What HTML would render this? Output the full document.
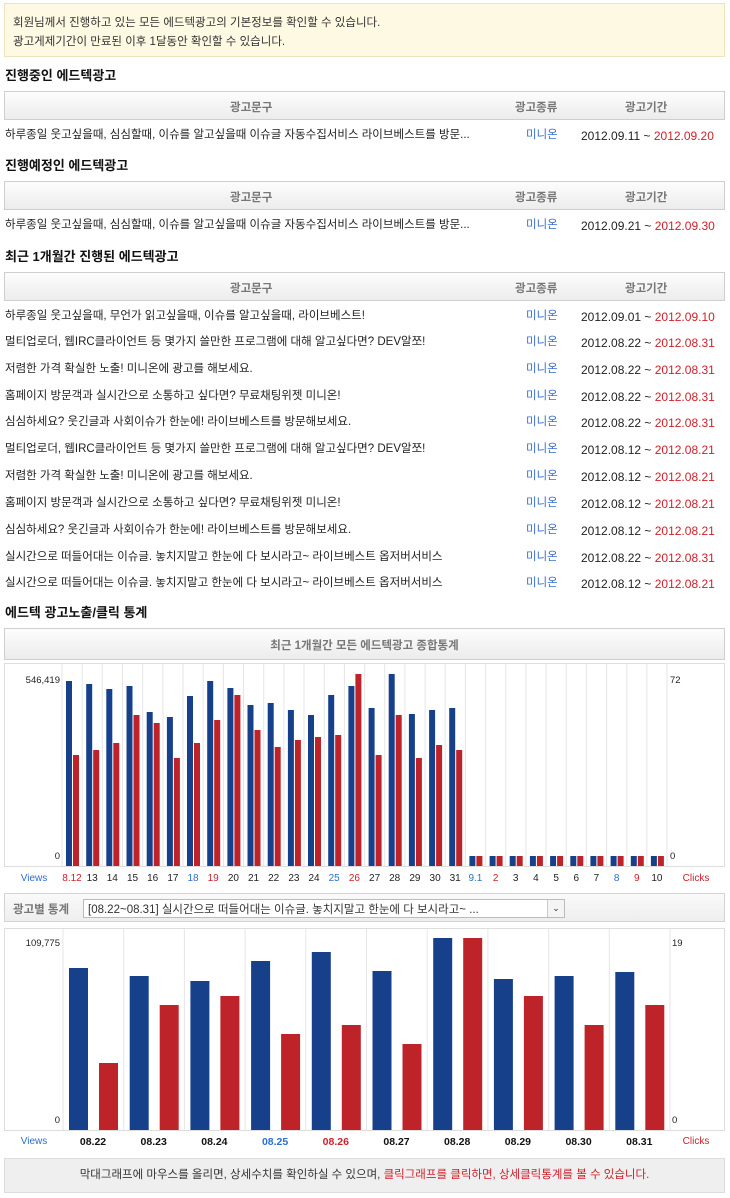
<!DOCTYPE html>
<html><head><meta charset="utf-8">
<style>
*{margin:0;padding:0;box-sizing:border-box}
body{width:730px;height:1198px;background:#fff;font-family:"Liberation Sans","Noto Sans CJK KR",sans-serif;font-size:12px;color:#333;position:relative;overflow:hidden}
.a{position:absolute}
.notice{left:4px;top:3px;width:721px;height:54px;background:#fdf9e3;border:1px solid #efe2bd}
.notice div{position:absolute;left:8px;font-size:11.5px;color:#333}
.h{left:5px;font-weight:bold;font-size:13px;color:#111}
.th{left:4px;width:721px;height:29px;border:1px solid #cfcfcf;background:linear-gradient(#fdfdfd,#ececec);font-weight:bold;color:#777;font-size:11.5px}
.th span{position:absolute;top:7px}
.row{left:4px;width:721px;height:20px;font-size:11.5px;color:#222}
.row .t{position:absolute;left:1px;top:0;white-space:nowrap}
.row .k{position:absolute;left:522px;top:0;color:#3a6fcf}
.row .d{position:absolute;left:577px;top:3px;white-space:nowrap;font-size:12px}
.r{color:#d0202a}
</style></head><body>
<div class="a notice"><div style="top:10px">회원님께서 진행하고 있는 모든 에드텍광고의 기본정보를 확인할 수 있습니다.</div><div style="top:29px">광고게제기간이 만료된 이후 1달동안 확인할 수 있습니다.</div></div>

<div class="a h" style="top:65px">진행중인 에드텍광고</div>
<div class="a th" style="top:91px"><span style="left:225px">광고문구</span><span style="left:510px">광고종류</span><span style="left:620px">광고기간</span></div>
<div class="a row" style="top:126px"><span class="t">하루종일 웃고싶을때, 심심할때, 이슈를 알고싶을때 이슈글 자동수집서비스 라이브베스트를 방문...</span><span class="k">미니온</span><span class="d">2012.09.11 ~ <span class="r">2012.09.20</span></span></div>

<div class="a h" style="top:155px">진행예정인 에드텍광고</div>
<div class="a th" style="top:181px"><span style="left:225px">광고문구</span><span style="left:510px">광고종류</span><span style="left:620px">광고기간</span></div>
<div class="a row" style="top:216px"><span class="t">하루종일 웃고싶을때, 심심할때, 이슈를 알고싶을때 이슈글 자동수집서비스 라이브베스트를 방문...</span><span class="k">미니온</span><span class="d">2012.09.21 ~ <span class="r">2012.09.30</span></span></div>

<div class="a h" style="top:246px">최근 1개월간 진행된 에드텍광고</div>
<div class="a th" style="top:272px"><span style="left:225px">광고문구</span><span style="left:510px">광고종류</span><span style="left:620px">광고기간</span></div>
<div class="a row" style="top:307px"><span class="t">하루종일 웃고싶을때, 무언가 읽고싶을때, 이슈를 알고싶을때, 라이브베스트!</span><span class="k">미니온</span><span class="d">2012.09.01 ~ <span class="r">2012.09.10</span></span></div>
<div class="a row" style="top:333px"><span class="t">멀티업로더, 웹IRC클라이언트 등 몇가지 쓸만한 프로그램에 대해 알고싶다면? DEV알쪼!</span><span class="k">미니온</span><span class="d">2012.08.22 ~ <span class="r">2012.08.31</span></span></div>
<div class="a row" style="top:360px"><span class="t">저렴한 가격 확실한 노출! 미니온에 광고를 해보세요.</span><span class="k">미니온</span><span class="d">2012.08.22 ~ <span class="r">2012.08.31</span></span></div>
<div class="a row" style="top:387px"><span class="t">홈페이지 방문객과 실시간으로 소통하고 싶다면? 무료채팅위젯 미니온!</span><span class="k">미니온</span><span class="d">2012.08.22 ~ <span class="r">2012.08.31</span></span></div>
<div class="a row" style="top:413px"><span class="t">심심하세요? 웃긴글과 사회이슈가 한눈에! 라이브베스트를 방문해보세요.</span><span class="k">미니온</span><span class="d">2012.08.22 ~ <span class="r">2012.08.31</span></span></div>
<div class="a row" style="top:440px"><span class="t">멀티업로더, 웹IRC클라이언트 등 몇가지 쓸만한 프로그램에 대해 알고싶다면? DEV알쪼!</span><span class="k">미니온</span><span class="d">2012.08.12 ~ <span class="r">2012.08.21</span></span></div>
<div class="a row" style="top:467px"><span class="t">저렴한 가격 확실한 노출! 미니온에 광고를 해보세요.</span><span class="k">미니온</span><span class="d">2012.08.12 ~ <span class="r">2012.08.21</span></span></div>
<div class="a row" style="top:494px"><span class="t">홈페이지 방문객과 실시간으로 소통하고 싶다면? 무료채팅위젯 미니온!</span><span class="k">미니온</span><span class="d">2012.08.12 ~ <span class="r">2012.08.21</span></span></div>
<div class="a row" style="top:521px"><span class="t">심심하세요? 웃긴글과 사회이슈가 한눈에! 라이브베스트를 방문해보세요.</span><span class="k">미니온</span><span class="d">2012.08.12 ~ <span class="r">2012.08.21</span></span></div>
<div class="a row" style="top:548px"><span class="t">실시간으로 떠들어대는 이슈글. 놓치지말고 한눈에 다 보시라고~ 라이브베스트 옵저버서비스</span><span class="k">미니온</span><span class="d">2012.08.22 ~ <span class="r">2012.08.31</span></span></div>
<div class="a row" style="top:574px"><span class="t">실시간으로 떠들어대는 이슈글. 놓치지말고 한눈에 다 보시라고~ 라이브베스트 옵저버서비스</span><span class="k">미니온</span><span class="d">2012.08.12 ~ <span class="r">2012.08.21</span></span></div>

<div class="a h" style="top:602px">에드텍 광고노출/클릭 통계</div>
<div class="a th" style="top:628px;height:32px"><span style="left:0;width:719px;text-align:center;top:8px">최근 1개월간 모든 에드텍광고 종합통계</span></div>

<svg class="a" style="left:0;top:660px" width="730" height="230" viewBox="0 660 730 230" font-family="Liberation Sans, Noto Sans CJK KR, sans-serif" font-size="10.5">
<rect x="4.5" y="663.5" width="720" height="203" fill="#fff" stroke="#ddd"/>
<g stroke="#e6e6e6">
<line x1="62" y1="664" x2="62" y2="866"/><line x1="82.2" y1="664" x2="82.2" y2="866"/><line x1="102.3" y1="664" x2="102.3" y2="866"/><line x1="122.5" y1="664" x2="122.5" y2="866"/><line x1="142.7" y1="664" x2="142.7" y2="866"/><line x1="162.9" y1="664" x2="162.9" y2="866"/><line x1="183" y1="664" x2="183" y2="866"/><line x1="203.2" y1="664" x2="203.2" y2="866"/><line x1="223.4" y1="664" x2="223.4" y2="866"/><line x1="243.5" y1="664" x2="243.5" y2="866"/><line x1="263.7" y1="664" x2="263.7" y2="866"/><line x1="283.9" y1="664" x2="283.9" y2="866"/><line x1="304" y1="664" x2="304" y2="866"/><line x1="324.2" y1="664" x2="324.2" y2="866"/><line x1="344.4" y1="664" x2="344.4" y2="866"/><line x1="364.6" y1="664" x2="364.6" y2="866"/><line x1="384.7" y1="664" x2="384.7" y2="866"/><line x1="404.9" y1="664" x2="404.9" y2="866"/><line x1="425.1" y1="664" x2="425.1" y2="866"/><line x1="445.2" y1="664" x2="445.2" y2="866"/><line x1="465.4" y1="664" x2="465.4" y2="866"/><line x1="485.6" y1="664" x2="485.6" y2="866"/><line x1="505.7" y1="664" x2="505.7" y2="866"/><line x1="525.9" y1="664" x2="525.9" y2="866"/><line x1="546.1" y1="664" x2="546.1" y2="866"/><line x1="566.3" y1="664" x2="566.3" y2="866"/><line x1="586.4" y1="664" x2="586.4" y2="866"/><line x1="606.6" y1="664" x2="606.6" y2="866"/><line x1="626.8" y1="664" x2="626.8" y2="866"/><line x1="646.9" y1="664" x2="646.9" y2="866"/><line x1="667" y1="664" x2="667" y2="866"/>
</g>
<g fill="#17408b">
<rect x="66" y="681" width="6" height="185"/><rect x="86.2" y="684" width="6" height="182"/><rect x="106.3" y="689" width="6" height="177"/><rect x="126.5" y="686" width="6" height="180"/><rect x="146.7" y="712" width="6" height="154"/><rect x="166.9" y="717" width="6" height="149"/><rect x="187" y="696" width="6" height="170"/><rect x="207.2" y="681" width="6" height="185"/><rect x="227.4" y="688" width="6" height="178"/><rect x="247.5" y="705" width="6" height="161"/><rect x="267.7" y="703" width="6" height="163"/><rect x="287.9" y="710" width="6" height="156"/><rect x="308" y="715" width="6" height="151"/><rect x="328.2" y="695" width="6" height="171"/><rect x="348.4" y="686" width="6" height="180"/><rect x="368.6" y="708" width="6" height="158"/><rect x="388.7" y="674" width="6" height="192"/><rect x="408.9" y="714" width="6" height="152"/><rect x="429.1" y="710" width="6" height="156"/><rect x="449.2" y="708" width="6" height="158"/>
<rect x="469.4" y="856" width="6" height="10"/><rect x="489.6" y="856" width="6" height="10"/><rect x="509.7" y="856" width="6" height="10"/><rect x="529.9" y="856" width="6" height="10"/><rect x="550.1" y="856" width="6" height="10"/><rect x="570.3" y="856" width="6" height="10"/><rect x="590.4" y="856" width="6" height="10"/><rect x="610.6" y="856" width="6" height="10"/><rect x="630.8" y="856" width="6" height="10"/><rect x="650.9" y="856" width="6" height="10"/>
</g>
<g fill="#be2329">
<rect x="73" y="755" width="6" height="111"/><rect x="93.2" y="750" width="6" height="116"/><rect x="113.3" y="743" width="6" height="123"/><rect x="133.5" y="715" width="6" height="151"/><rect x="153.7" y="723" width="6" height="143"/><rect x="173.9" y="758" width="6" height="108"/><rect x="194" y="743" width="6" height="123"/><rect x="214.2" y="720" width="6" height="146"/><rect x="234.4" y="695" width="6" height="171"/><rect x="254.5" y="730" width="6" height="136"/><rect x="274.7" y="747" width="6" height="119"/><rect x="294.9" y="740" width="6" height="126"/><rect x="315" y="737" width="6" height="129"/><rect x="335.2" y="735" width="6" height="131"/><rect x="355.4" y="674" width="6" height="192"/><rect x="375.6" y="755" width="6" height="111"/><rect x="395.7" y="715" width="6" height="151"/><rect x="415.9" y="758" width="6" height="108"/><rect x="436.1" y="745" width="6" height="121"/><rect x="456.2" y="750" width="6" height="116"/>
<rect x="476.4" y="856" width="6" height="10"/><rect x="496.6" y="856" width="6" height="10"/><rect x="516.7" y="856" width="6" height="10"/><rect x="536.9" y="856" width="6" height="10"/><rect x="557.1" y="856" width="6" height="10"/><rect x="577.3" y="856" width="6" height="10"/><rect x="597.4" y="856" width="6" height="10"/><rect x="617.6" y="856" width="6" height="10"/><rect x="637.8" y="856" width="6" height="10"/><rect x="657.9" y="856" width="6" height="10"/>
</g>
<g fill="#222" font-size="9.5"><text x="60" y="683" text-anchor="end">546,419</text><text x="60" y="859" text-anchor="end">0</text><text x="670" y="683">72</text><text x="670" y="859">0</text></g>
<g text-anchor="middle" fill="#222" font-size="10">
<text x="34" y="881" fill="#2b6fd0">Views</text><text x="696" y="881" fill="#d0202a">Clicks</text>
<text x="72" y="881" fill="#d0202a">8.12</text><text x="92.2" y="881">13</text><text x="112.3" y="881">14</text><text x="132.5" y="881">15</text><text x="152.7" y="881">16</text><text x="172.9" y="881">17</text><text x="193" y="881" fill="#2b6fd0">18</text><text x="213.2" y="881" fill="#d0202a">19</text><text x="233.4" y="881">20</text><text x="253.5" y="881">21</text><text x="273.7" y="881">22</text><text x="293.9" y="881">23</text><text x="314" y="881">24</text><text x="334.2" y="881" fill="#2b6fd0">25</text><text x="354.4" y="881" fill="#d0202a">26</text><text x="374.6" y="881">27</text><text x="394.7" y="881">28</text><text x="414.9" y="881">29</text><text x="435.1" y="881">30</text><text x="455.2" y="881">31</text><text x="475.4" y="881" fill="#2b6fd0">9.1</text><text x="495.6" y="881" fill="#d0202a">2</text><text x="515.7" y="881">3</text><text x="535.9" y="881">4</text><text x="556.1" y="881">5</text><text x="576.3" y="881">6</text><text x="596.4" y="881">7</text><text x="616.6" y="881" fill="#2b6fd0">8</text><text x="636.8" y="881" fill="#d0202a">9</text><text x="656.9" y="881">10</text>
</g>
</svg>

<div class="a" style="left:4px;top:893px;width:721px;height:29px;border:1px solid #d4d4d4;background:linear-gradient(#fafafa,#eee)">
<span style="position:absolute;left:8px;top:7px;font-weight:bold;color:#777;font-size:11.5px">광고별 통계</span>
<div style="position:absolute;left:78px;top:5px;width:482px;height:19px;border:1px solid #bbb;background:#fff;font-size:11.5px;color:#333;padding:1px 0 0 4px;white-space:nowrap;overflow:hidden">[08.22~08.31] 실시간으로 떠들어대는 이슈글. 놓치지말고 한눈에 다 보시라고~ ...<span style="position:absolute;right:0;top:0;width:17px;height:17px;border-left:1px solid #ccc;background:#f4f4f4;text-align:center;font-size:9px;line-height:16px">&#8964;</span></div>
</div>

<svg class="a" style="left:0;top:926px" width="730" height="230" viewBox="0 926 730 230" font-family="Liberation Sans, Noto Sans CJK KR, sans-serif">
<rect x="4.5" y="928.5" width="720" height="202" fill="#fff" stroke="#ddd"/>
<g stroke="#e6e6e6"><line x1="63" y1="929" x2="63" y2="1130"/><line x1="123.7" y1="929" x2="123.7" y2="1130"/><line x1="184.4" y1="929" x2="184.4" y2="1130"/><line x1="245.1" y1="929" x2="245.1" y2="1130"/><line x1="305.8" y1="929" x2="305.8" y2="1130"/><line x1="366.5" y1="929" x2="366.5" y2="1130"/><line x1="427.2" y1="929" x2="427.2" y2="1130"/><line x1="487.9" y1="929" x2="487.9" y2="1130"/><line x1="548.6" y1="929" x2="548.6" y2="1130"/><line x1="609.3" y1="929" x2="609.3" y2="1130"/><line x1="670" y1="929" x2="670" y2="1130"/></g>
<g fill="#17408b"><rect x="69" y="968" width="19" height="162"/><rect x="129.7" y="976" width="19" height="154"/><rect x="190.4" y="981" width="19" height="149"/><rect x="251.1" y="961" width="19" height="169"/><rect x="311.8" y="952" width="19" height="178"/><rect x="372.5" y="971" width="19" height="159"/><rect x="433.2" y="938" width="19" height="192"/><rect x="493.9" y="979" width="19" height="151"/><rect x="554.6" y="976" width="19" height="154"/><rect x="615.3" y="972" width="19" height="158"/></g>
<g fill="#be2329"><rect x="99" y="1063" width="19" height="67"/><rect x="159.7" y="1005" width="19" height="125"/><rect x="220.4" y="996" width="19" height="134"/><rect x="281.1" y="1034" width="19" height="96"/><rect x="341.8" y="1025" width="19" height="105"/><rect x="402.5" y="1044" width="19" height="86"/><rect x="463.2" y="938" width="19" height="192"/><rect x="523.9" y="996" width="19" height="134"/><rect x="584.6" y="1025" width="19" height="105"/><rect x="645.3" y="1005" width="19" height="125"/></g>
<g fill="#222" font-size="9.5"><text x="60" y="946" text-anchor="end">109,775</text><text x="60" y="1123" text-anchor="end">0</text><text x="672" y="946">19</text><text x="672" y="1123">0</text></g>
<g text-anchor="middle" font-size="10.5" font-weight="bold" fill="#111">
<text x="34" y="1144" fill="#2b6fd0" font-weight="normal" font-size="10">Views</text><text x="696" y="1144" fill="#d0202a" font-weight="normal" font-size="10">Clicks</text>
<text x="93" y="1145">08.22</text><text x="153.7" y="1145">08.23</text><text x="214.4" y="1145">08.24</text><text x="275.1" y="1145" fill="#2b6fd0">08.25</text><text x="335.8" y="1145" fill="#d0202a">08.26</text><text x="396.5" y="1145">08.27</text><text x="457.2" y="1145">08.28</text><text x="517.9" y="1145">08.29</text><text x="578.6" y="1145">08.30</text><text x="639.3" y="1145">08.31</text>
</g>
</svg>

<div class="a" style="left:4px;top:1158px;width:721px;height:35px;background:#efefef;border:1px solid #ddd;text-align:center;font-size:11.5px;line-height:33px;color:#333">막대그래프에 마우스를 올리면, 상세수치를 확인하실 수 있으며, <span class="r">클릭그래프를 클릭하면, 상세클릭통계를 볼 수 있습니다.</span></div>
</body></html>
